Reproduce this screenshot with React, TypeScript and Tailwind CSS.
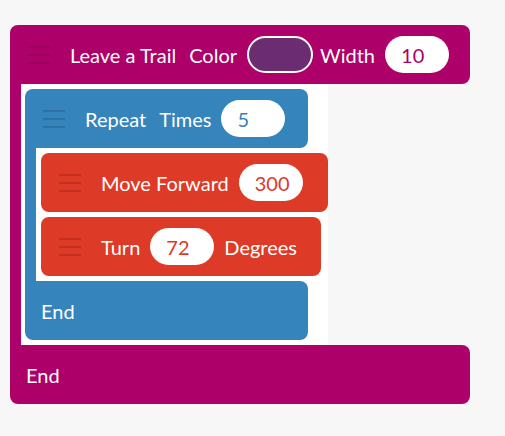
import React from 'react';

type Tone = 'magenta' | 'blue' | 'red';

const toneBg: Record<Tone, string> = {
  magenta: 'bg-[#ad0069]',
  blue: 'bg-[#3584bb]',
  red: 'bg-[#dd3a27]',
};

const toneLine: Record<Tone, string> = {
  magenta: 'bg-[#98005c]',
  blue: 'bg-[#2d72a4]',
  red: 'bg-[#c2301f]',
};

const toneText: Record<Tone, string> = {
  magenta: 'text-[#ad0069]',
  blue: 'text-[#3584bb]',
  red: 'text-[#dd3a27]',
};

const Handle: React.FC<{ tone: Tone }> = ({ tone }) => (
  <div className="flex flex-col gap-[6px] w-[22px] mr-5 shrink-0">
    <span className={`block h-[2px] w-full ${toneLine[tone]}`} />
    <span className={`block h-[2px] w-full ${toneLine[tone]}`} />
    <span className={`block h-[2px] w-full ${toneLine[tone]}`} />
  </div>
);

const Pill: React.FC<{ value: string; tone: Tone }> = ({ value, tone }) => (
  <span
    className={`inline-flex items-center shrink-0 h-[37px] w-[64px] rounded-full bg-white pl-4 ${toneText[tone]}`}
  >
    {value}
  </span>
);

const Row: React.FC<{ tone: Tone; className?: string; children: React.ReactNode }> = ({
  tone,
  className = '',
  children,
}) => (
  <div
    className={`flex items-center shrink-0 h-[59px] rounded-lg pl-[18px] pr-6 text-white whitespace-nowrap ${toneBg[tone]} ${className}`}
  >
    <Handle tone={tone} />
    <div className="flex items-center gap-[10px]">{children}</div>
  </div>
);

// C-shaped block: header row, coloured spine with a white tray of children, End row
const CBlock: React.FC<{
  tone: Tone;
  width: string;
  header: React.ReactNode;
  tray: string;
  children: React.ReactNode;
}> = ({ tone, width, header, tray, children }) => (
  <div className="flex flex-col">
    <Row tone={tone} className={`${width} rounded-bl-none`}>
      {header}
    </Row>
    <div className="flex">
      <div className={`w-[11px] shrink-0 ${toneBg[tone]}`} />
      <div className={`flex flex-col items-start gap-[5px] bg-white rounded-l-lg py-[5px] ${tray}`}>
        {children}
      </div>
    </div>
    <div
      className={`flex items-center h-[59px] rounded-lg rounded-tl-none pl-4 text-white ${toneBg[tone]} ${width}`}
    >
      End
    </div>
  </div>
);

export default function App() {
  return (
    <div
      className="min-h-[436px] w-[505px] bg-[#f7f7f7] pl-[10px] pt-[25px] text-[20px]"
      style={{ fontFamily: 'Lato, "Open Sans", sans-serif' }}
    >
      <div className="flex flex-col items-start">
        <CBlock
          tone="magenta"
          width="w-[460px]"
          tray="pl-[4px]"
          header={
            <>
              <span>Leave a Trail</span>
              <span className="ml-[3px]">Color</span>
              <span className="shrink-0 h-[37px] w-[66px] rounded-full border-2 border-white bg-[#6b2c72]" />
              <span className="-ml-[3px]">Width</span>
              <Pill value="10" tone="magenta" />
            </>
          }
        >
          <CBlock
            tone="blue"
            width="w-[283px]"
            tray="pl-[5px]"
            header={
              <>
                <span>Repeat</span>
                <span className="ml-[3px]">Times</span>
                <Pill value="5" tone="blue" />
              </>
            }
          >
            <Row tone="red" className="w-[287px]">
              <span>Move Forward</span>
              <Pill value="300" tone="red" />
            </Row>
            <Row tone="red" className="w-[280px]">
              <span>Turn</span>
              <Pill value="72" tone="red" />
              <span>Degrees</span>
            </Row>
          </CBlock>
        </CBlock>
      </div>
    </div>
  );
}
